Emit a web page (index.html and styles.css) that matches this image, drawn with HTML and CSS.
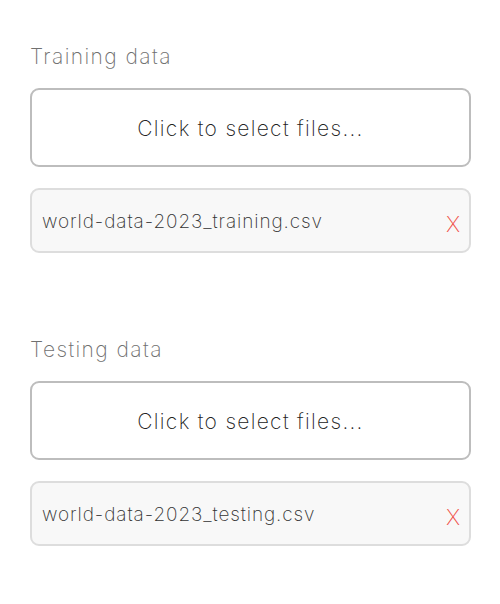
FILE: index.html
```html
<!DOCTYPE html>
<html>
<head>
<meta charset="utf-8">
<link rel="stylesheet" href="styles.css">
</head>
<body>
<div class="page">
  <section class="group">
    <div class="label">Training data</div>
    <div class="picker">Click to select files...</div>
    <div class="file">
      <span class="name">world-data-2023_training.csv</span>
      <span class="remove">X</span>
    </div>
  </section>
  <section class="group">
    <div class="label">Testing data</div>
    <div class="picker">Click to select files...</div>
    <div class="file">
      <span class="name">world-data-2023_testing.csv</span>
      <span class="remove">X</span>
    </div>
  </section>
</div>
</body>
</html>
```
FILE: styles.css
```css
html, body {
  margin: 0;
  padding: 0;
  background: #ffffff;
}
body {
  font-family: Inter, "Noto Sans", sans-serif;
  font-weight: 200;
}
.page {
  padding: 42px 29px 0 30px;
  display: flex;
  flex-direction: column;
  gap: 82px;
}
.group {
  display: flex;
  flex-direction: column;
}
.label {
  font-size: 21px;
  line-height: 30px;
  color: #707070;
  letter-spacing: 1.4px;
  margin-bottom: 16px;
}
.picker {
  height: 74px;
  border: 2px solid #bdbdbd;
  border-radius: 9px;
  display: flex;
  align-items: center;
  justify-content: center;
  font-size: 21px;
  letter-spacing: 1.3px;
  color: #222;
  margin-bottom: 21px;
  padding-top: 1px;
}
.file {
  height: 61px;
  border: 2px solid #dddddd;
  border-radius: 9px;
  background: #f8f8f8;
  display: flex;
  align-items: center;
  justify-content: space-between;
  padding: 0 9px 0 10px;
}
.name {
  font-size: 19px;
  letter-spacing: 0.9px;
  color: #333;
  margin-top: 2px;
}
.remove {
  font-size: 22px;
  color: #f0504a;
  font-weight: 200;
  margin-top: 7px;
}
```
